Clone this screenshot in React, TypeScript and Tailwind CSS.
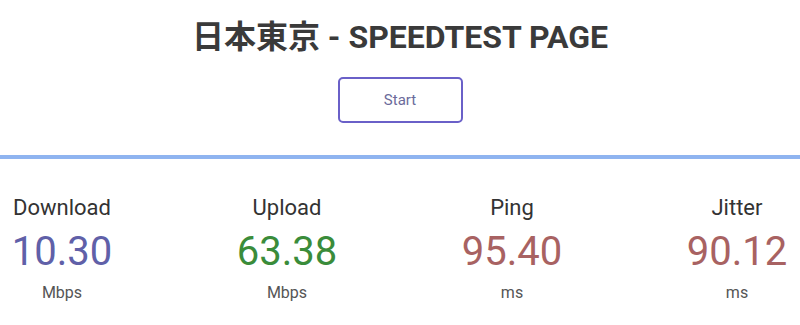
const stats = [
  { label: "Download", value: "10.30", unit: "Mbps", color: "text-[#6060a8]" },
  { label: "Upload", value: "63.38", unit: "Mbps", color: "text-[#3a8c3a]" },
  { label: "Ping", value: "95.40", unit: "ms", color: "text-[#a86262]" },
  { label: "Jitter", value: "90.12", unit: "ms", color: "text-[#a86262]" },
]

export default function App() {
  return (
    <div className="w-[800px] h-[325px] overflow-hidden bg-white font-['Roboto','Noto_Sans_CJK_JP',sans-serif]">
      <h1 className="mt-[18px] text-center text-[32px] leading-[38px] font-bold text-[#3a3a3a]">
        日本東京 - SPEEDTEST PAGE
      </h1>
      <div className="flex justify-center mt-[21px]">
        <button className="w-[125px] h-[46px] border-2 border-[#6a60c8] rounded-[5px] text-[15px] text-[#6b6b9b]">
          Start
        </button>
      </div>
      <div className="mt-[32px] h-[4px] bg-[#8fb4f0]" />
      <div className="flex gap-[101px] mt-[36px] whitespace-nowrap">
        {stats.map((s) => (
          <div key={s.label} className="w-[124px] flex flex-col items-center">
            <div className="text-[22px] leading-[26px] text-[#333]">{s.label}</div>
            <div className={`mt-[7px] text-[40px] leading-[48px] ${s.color}`}>{s.value}</div>
            <div className="mt-[7px] text-[16px] leading-[19px] text-[#555]">{s.unit}</div>
          </div>
        ))}
      </div>
    </div>
  )
}
